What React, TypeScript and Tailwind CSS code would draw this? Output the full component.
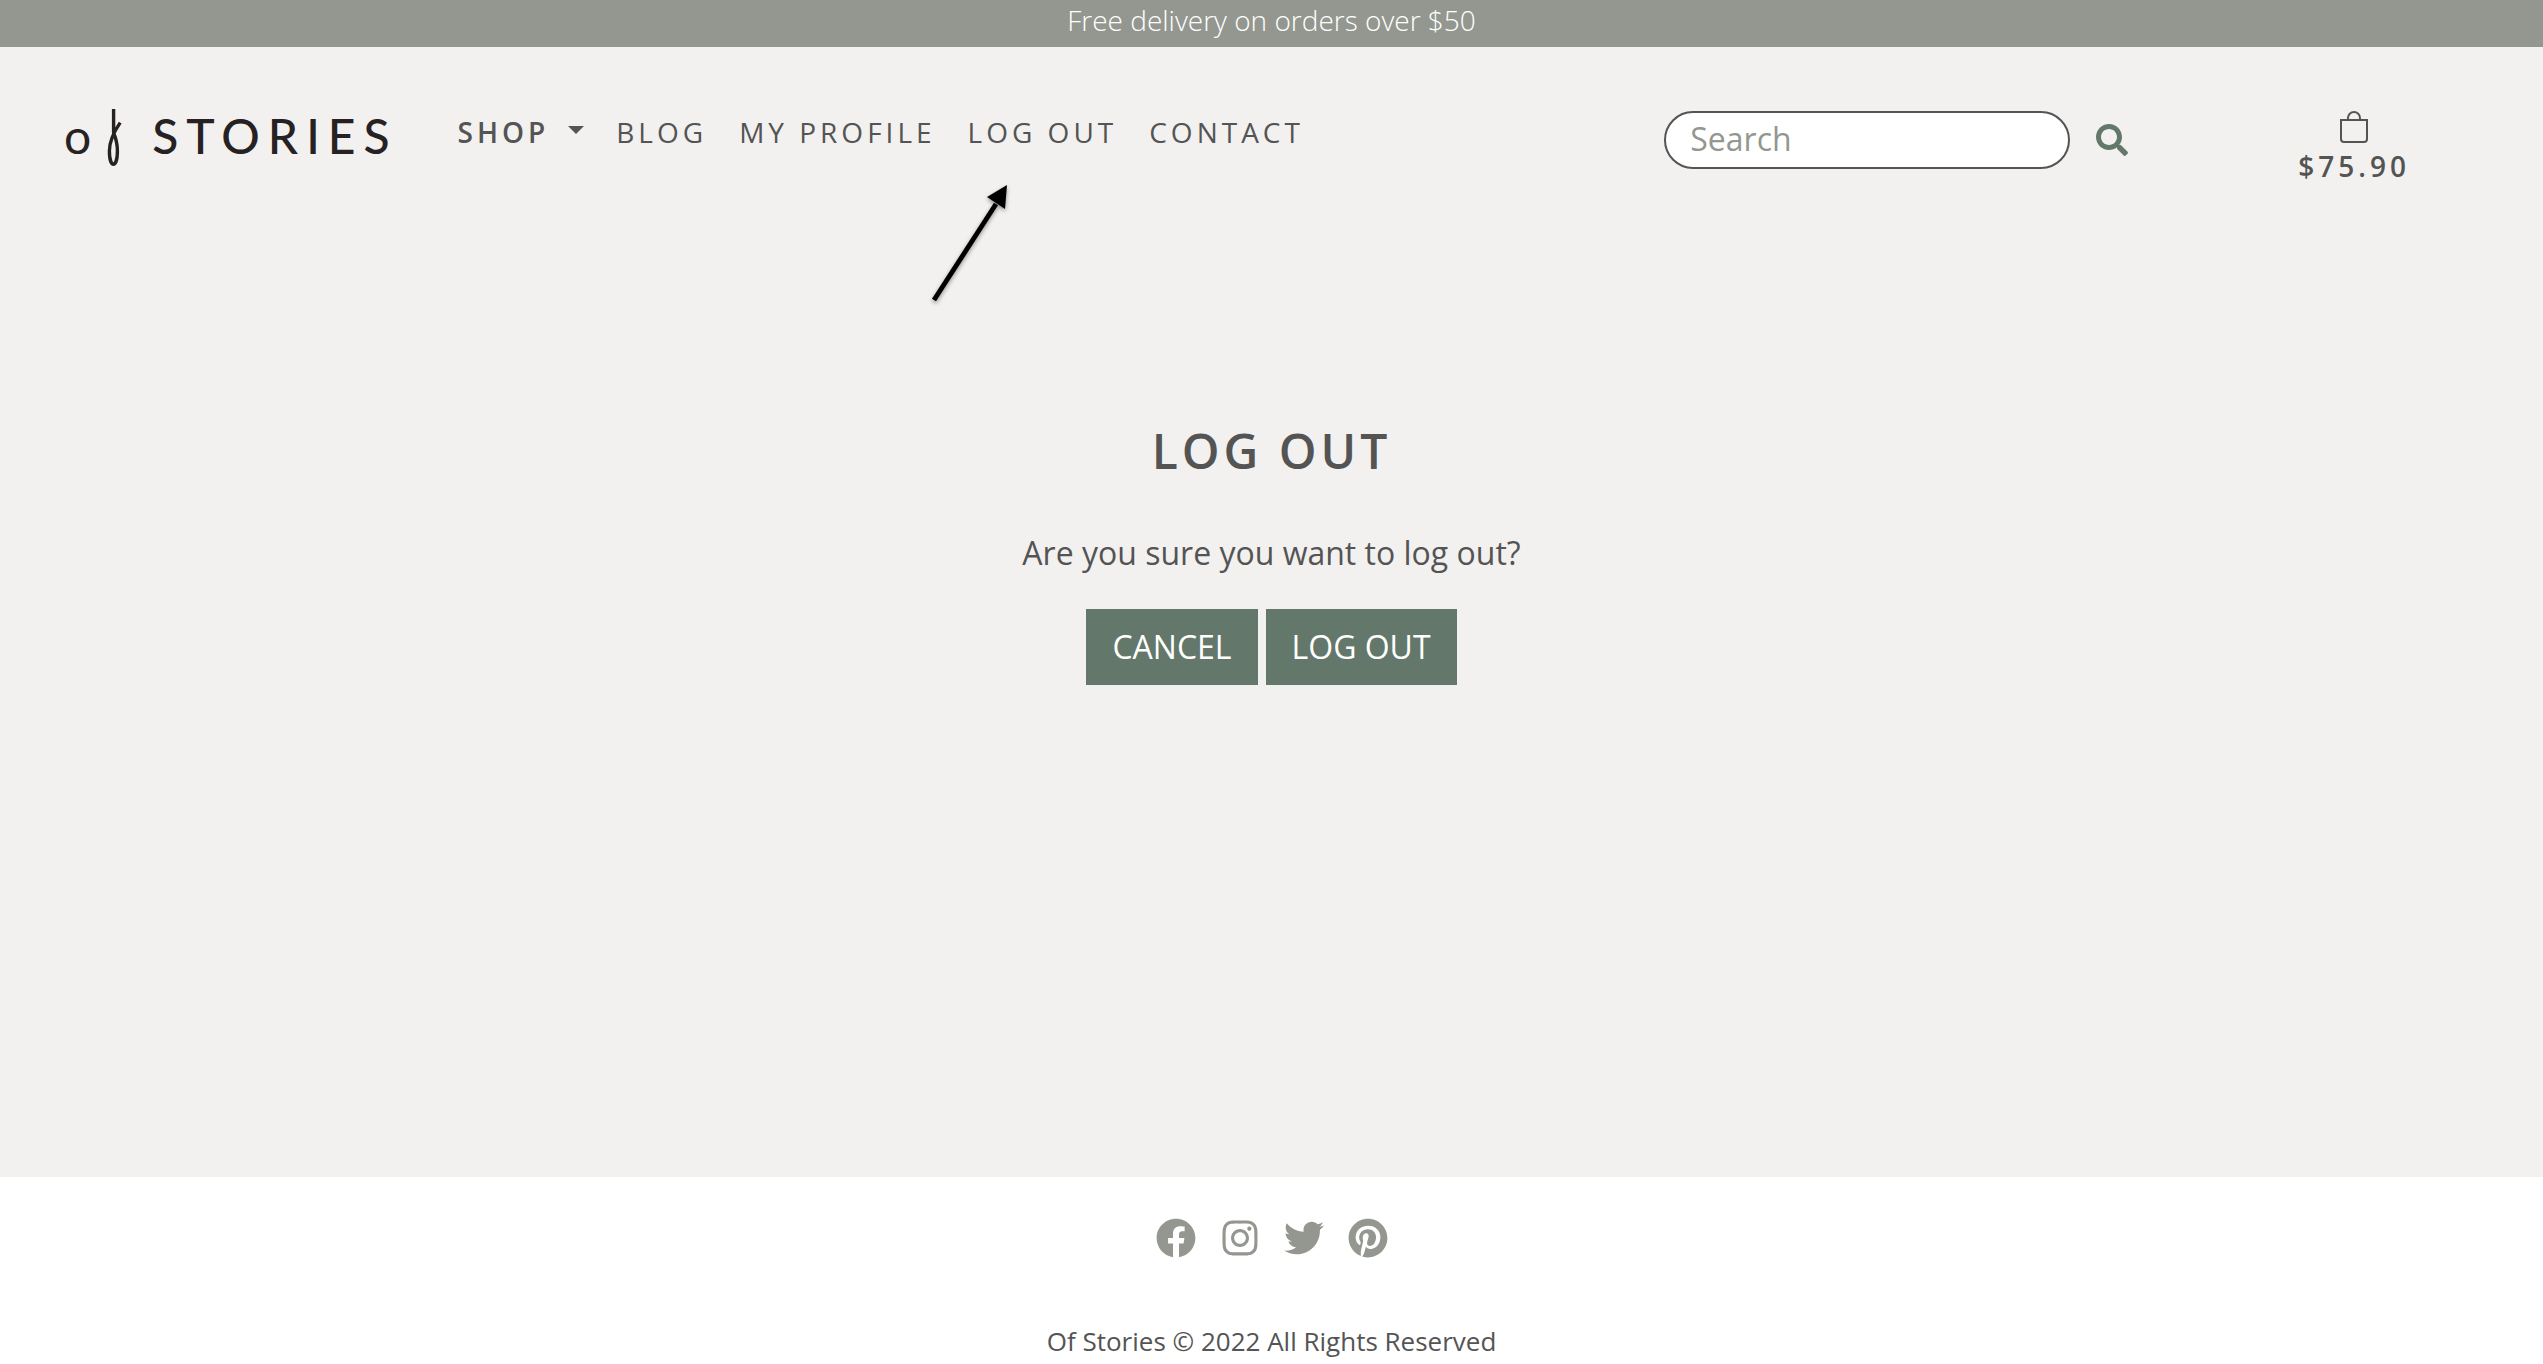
import React from "react";
import { FaFacebook, FaInstagram, FaPinterest, FaSearch, FaTwitter } from "react-icons/fa";
import { BsBag } from "react-icons/bs";

function Logo() {
  return (
    <a href="#home" aria-label="Of Stories home" className="flex items-start text-[#262223]">
      <span className="font-[Lato,sans-serif] text-[48px] leading-[54px]">o</span>
      <svg viewBox="0 0 16 58" className="ml-4 h-[58px] w-4" fill="none" stroke="currentColor" strokeWidth="3.4" aria-hidden="true">
        <path d="M6.6 0V24C8.8 29 10.4 34 10.4 42C10.4 50 8.6 55.2 6.4 55.2C4.2 55.2 2.4 50 2.4 42C2.4 33 5 25.5 13.2 13.6" strokeLinejoin="round" />
      </svg>
      <span className="ml-[29px] font-[Lato,sans-serif] text-[48px] font-medium leading-[54px] tracking-[8px]">STORIES</span>
    </a>
  );
}

function Arrow() {
  return (
    <svg viewBox="0 0 84 128" className="pointer-events-none absolute -left-10 top-[72px] h-32 w-[84px] drop-shadow-[0_2px_2px_rgba(0,0,0,0.4)]" aria-hidden="true">
      <path d="M6 119L68 23" stroke="#000" strokeWidth="4.8" fill="none" />
      <path d="M79 4L59 16L77 28Z" fill="#000" />
    </svg>
  );
}

const socials = [
  { label: "Facebook", Icon: FaFacebook },
  { label: "Instagram", Icon: FaInstagram },
  { label: "Twitter", Icon: FaTwitter },
  { label: "Pinterest", Icon: FaPinterest },
];

export default function App() {
  return (
    <div className="flex min-h-screen flex-col bg-[#f2f1ef] font-['Open_Sans',sans-serif] text-[32px] text-[#545454]">
      <div className="bg-[#93978f] pb-1.5 text-center text-[28px] font-light leading-[41px] text-white">
        Free delivery on orders over $50
      </div>

      <header className="flex items-start pl-16 pr-[133px] pt-[62px]">
        <Logo />
        <nav className="ml-[60px] flex gap-8 whitespace-nowrap text-[28px] leading-[46px] tracking-[4px]">
          <button type="button" className="flex items-center gap-[19px] font-semibold tracking-[4px]">
            SHOP
            <svg viewBox="0 0 16 8" className="mb-1 h-2 w-4" aria-hidden="true">
              <path d="M0 0H16L8 8Z" fill="currentColor" />
            </svg>
          </button>
          <a href="#blog">BLOG</a>
          <a href="#profile">MY PROFILE</a>
          <a href="#logout" className="relative">
            LOG OUT
            <Arrow />
          </a>
          <a href="#contact">CONTACT</a>
        </nav>

        <form className="ml-auto flex items-center gap-[26px] pt-0.5" onSubmit={(e) => e.preventDefault()}>
          <input
            type="search"
            aria-label="Search"
            placeholder="Search"
            className="h-[58px] w-[406px] rounded-full border-2 border-[#545454] bg-white px-6 pb-1 placeholder:text-[#93978f]"
          />
          <button type="submit" aria-label="Submit search" className="text-[#63786a]">
            <FaSearch />
          </button>
        </form>

        <a href="#bag" className="ml-[170px] flex flex-col items-center pt-0.5 text-[28px] font-semibold leading-[46px] tracking-[4px]">
          <BsBag className="text-[32px]" />
          $75.90
        </a>
      </header>

      <main className="flex flex-1 flex-col items-center pt-[233px]">
        <h1 className="text-[48px] font-semibold leading-[58px] tracking-[4px]">LOG OUT</h1>
        <p className="mt-[49px] leading-12">Are you sure you want to log out?</p>
        <div className="mt-8 flex gap-2 leading-12 text-white">
          <button type="button" className="bg-[#63786a] px-[26px] py-[14px]">CANCEL</button>
          <button type="button" className="bg-[#63786a] px-[26px] py-[14px]">LOG OUT</button>
        </div>
      </main>

      <footer className="flex flex-col items-center bg-white pb-1 pt-[41px]">
        <div className="flex gap-6 text-[40px] text-[#93978f]">
          {socials.map(({ label, Icon }) => (
            <a key={label} href="#social" aria-label={label}>
              <Icon />
            </a>
          ))}
        </div>
        <p className="mt-16 text-[26px] leading-[38px]">Of Stories © 2022 All Rights Reserved</p>
      </footer>
    </div>
  );
}
